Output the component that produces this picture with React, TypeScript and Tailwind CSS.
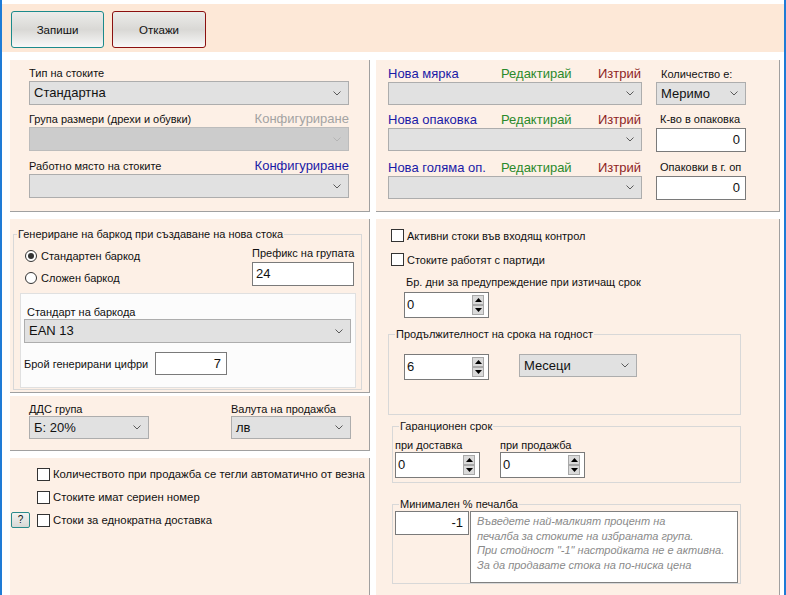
const panel = 'bg-[#fdf0e6] border-[#a0a0a0]'

function Chevron({ muted }: { muted?: boolean }) {
  return (
    <svg width="8" height="5" viewBox="0 0 8 5" className="shrink-0">
      <path d="M0.5 0.5 L4 4 L7.5 0.5" fill="none" stroke={muted ? '#b4b4b4' : '#5a5a5a'} strokeWidth="1" />
    </svg>
  )
}

function Select({ value, className = '', disabled }: { value?: string; className?: string; disabled?: boolean }) {
  return (
    <div
      className={`flex items-center justify-between border pl-[4px] pr-[7px] text-[13px] ${
        disabled ? 'border-[#bcbcbc] bg-[#cccccc]' : 'border-[#adadad] bg-[#e1e1e1]'
      } ${className}`}
    >
      <span>{value}</span>
      <Chevron muted={disabled} />
    </div>
  )
}

function Input({ value, className = '' }: { value: string; className?: string }) {
  return (
    <div className={`flex items-center justify-end border border-[#7a7a7a] bg-white pr-[5px] text-[13px] ${className}`}>
      {value}
    </div>
  )
}

function SpinBtn({ up }: { up?: boolean }) {
  return (
    <div className="flex h-[10px] w-[12px] items-center justify-center border border-[#a8a8a8] bg-[#dadada]">
      <svg width="7" height="4" viewBox="0 0 7 4">
        <path d={up ? 'M0 4 L3.5 0 L7 4 Z' : 'M0 0 L3.5 4 L7 0 Z'} fill="#000" />
      </svg>
    </div>
  )
}

function Spin({ value, className = '' }: { value: string; className?: string }) {
  return (
    <div className={`flex h-[26px] w-[85px] items-center justify-between border border-[#7a7a7a] bg-white pl-[2px] pr-[4px] text-[13px] ${className}`}>
      <span>{value}</span>
      <div className="flex flex-col">
        <SpinBtn up />
        <SpinBtn />
      </div>
    </div>
  )
}

function Check({ label }: { label: string }) {
  return (
    <div className="flex h-[13px] items-center gap-[3px]">
      <span className="h-[13px] w-[13px] shrink-0 border border-[#333333] bg-white" />
      <span className="whitespace-nowrap">{label}</span>
    </div>
  )
}

function Radio({ label, on }: { label: string; on?: boolean }) {
  return (
    <div className="flex h-[12px] items-center gap-[4px]">
      <span className="flex h-[12px] w-[12px] shrink-0 items-center justify-center rounded-full border border-[#333333] bg-white">
        {on && <span className="h-[6px] w-[6px] rounded-full bg-[#333333]" />}
      </span>
      <span className="whitespace-nowrap">{label}</span>
    </div>
  )
}

function MeasureRow({ title, h }: { title: string; h: string }) {
  return (
    <>
      <div className={`flex items-end text-[13px] leading-[16px] ${h}`}>
        <span className="w-[113px] text-[#1a1aa6]">{title}</span>
        <span className="w-[97px] text-[#2b8a2b]">Редактирай</span>
        <span className="text-[#8e1f1f]">Изтрий</span>
      </div>
      <Select className="h-[23px]" />
    </>
  )
}

export default function App() {
  return (
    <div className="flex h-[595px] w-[786px] flex-col overflow-hidden border-x-2 border-[#1e7bd6] bg-white font-['Liberation_Sans',Arial,sans-serif] text-[11px] leading-[14px] text-[#111111]">
      {/* Toolbar */}
      <div className="mt-[4px] flex h-[48px] shrink-0 gap-[8px] bg-[#fde8d7] pl-[9px] pt-[7px]">
        <button className="h-[37px] w-[93px] rounded-[3px] border border-[#1b8a8c] bg-gradient-to-b from-[#ececea] via-[#d9d8d5] to-[#f8f8f8] text-[11.5px]">
          Запиши
        </button>
        <button className="h-[37px] w-[94px] rounded-[3px] border border-[#8b1010] bg-gradient-to-b from-[#ececea] via-[#d9d8d5] to-[#f8f8f8] text-[11.5px]">
          Откажи
        </button>
      </div>

      <div className="mt-[8px] flex min-h-0 flex-1 gap-[6px] pl-[8px]">
        {/* Left column */}
        <div className="flex w-[360px] flex-col">
          <div className={`h-[152px] border-b border-r pl-[19px] pr-[20px] pt-[6px] ${panel}`}>
            <div className="leading-[15px]">Тип на стоките</div>
            <Select value="Стандартна" className="h-[24px]" />
            <div className="flex h-[22px] items-end justify-between">
              <span className="leading-[15px]">Група размери (дрехи и обувки)</span>
              <span className="text-[13px] leading-[16px] text-[#a3a3a3]">Конфигуриране</span>
            </div>
            <Select disabled className="h-[24px]" />
            <div className="flex h-[23px] items-end justify-between">
              <span className="leading-[15px]">Работно място на стоките</span>
              <span className="text-[13px] leading-[16px] text-[#1a1aa6]">Конфигуриране</span>
            </div>
            <Select className="h-[24px]" />
          </div>

          <div className={`mt-[7px] h-[174px] border-b border-r pl-[3px] pt-[8px] ${panel}`}>
            <fieldset className="w-[349px] border border-[#d8d8d8]">
              <legend className="ml-[3px] px-[1px]">Генериране на баркод при създаване на нова стока</legend>
              <div className="flex">
                <div className="flex w-[238px] flex-col gap-[10px] pl-[11px] pt-[9px]">
                  <Radio label="Стандартен баркод" on />
                  <Radio label="Сложен баркод" />
                </div>
                <div className="w-[102px] pt-[5px]">
                  <div className="whitespace-nowrap">Префикс на групата</div>
                  <div className="mt-[2px] flex h-[24px] items-center border border-[#7a7a7a] bg-white pl-[3px] text-[13px]">24</div>
                </div>
              </div>
              <div className="mb-[1px] ml-[6px] mt-[7px] h-[95px] w-[336px] border border-[#e0e0e0] bg-[#fcfcfc] pl-[3px] pt-[11px]">
                <div className="pl-[3px]">Стандарт на баркода</div>
                <Select value="EAN 13" className="h-[24px] w-[327px]" />
                <div className="mt-[9px] flex items-center">
                  <span className="w-[131px]">Брой генерирани цифри</span>
                  <Input value="7" className="h-[23px] w-[72px]" />
                </div>
              </div>
            </fieldset>
          </div>

          <div className={`mt-[3px] flex h-[55px] gap-[82px] border-b border-r pl-[19px] pt-[6px] ${panel}`}>
            <div className="w-[120px]">
              <div>ДДС група</div>
              <Select value="Б: 20%" className="h-[23px]" />
            </div>
            <div className="w-[120px]">
              <div>Валута на продажба</div>
              <Select value="лв" className="h-[23px]" />
            </div>
          </div>

          <div className={`mt-[7px] flex flex-1 flex-col gap-[7px] border-r pl-[1px] pt-[8px] text-[11.3px] ${panel}`}>
            <div className="flex h-[16px] items-center pl-[26px]">
              <Check label="Количеството при продажба се тегли автоматично от везна" />
            </div>
            <div className="flex h-[16px] items-center pl-[26px]">
              <Check label="Стоките имат сериен номер" />
            </div>
            <div className="flex h-[16px] items-center gap-[7px]">
              <button className="flex h-[16px] w-[19px] items-center justify-center rounded-[2px] border border-[#2a8a8a] bg-gradient-to-b from-[#f2f2f0] to-[#d8d8d5] text-[10px]">
                ?
              </button>
              <Check label="Стоки за еднократна доставка" />
            </div>
          </div>
        </div>

        {/* Right column */}
        <div className="flex w-[404px] flex-col">
          <div className={`flex h-[152px] gap-[14px] border-b border-r pl-[12px] ${panel}`}>
            <div className="w-[254px]">
              <MeasureRow title="Нова мярка" h="h-[22px]" />
              <MeasureRow title="Нова опаковка" h="h-[23px]" />
              <MeasureRow title="Нова голяма оп." h="h-[25px]" />
            </div>
            <div className="w-[90px]">
              <div className="flex h-[22px] items-end pb-[1px] pl-[5px]">Количество е:</div>
              <Select value="Меримо" className="h-[23px]" />
              <div className="flex h-[23px] items-end pb-[2px] pl-[4px]">К-во в опаковка</div>
              <Input value="0" className="h-[24px]" />
              <div className="flex h-[24px] items-end pb-[2px] pl-[4px]">Опаковки в г. оп</div>
              <Input value="0" className="h-[24px]" />
            </div>
          </div>

          <div className={`mt-[7px] flex flex-1 flex-col border-r pt-[10px] ${panel}`}>
            <div className="flex flex-col gap-[11px] pl-[15px]">
              <Check label="Активни стоки във входящ контрол" />
              <Check label="Стоките работят с партиди" />
            </div>
            <div className="ml-[30px] mt-[9px]">Бр. дни за предупреждение при изтичащ срок</div>
            <Spin value="0" className="ml-[28px] mt-[3px]" />

            <fieldset className="ml-[12px] mt-[9px] w-[353px] border border-[#d8d8d8] pb-[34px]">
              <legend className="ml-[6px] px-[1px]">Продължителност на срока на годност</legend>
              <div className="flex items-start gap-[30px] pl-[15px] pt-[13px]">
                <Spin value="6" />
                <Select value="Месеци" className="h-[23px] w-[118px]" />
              </div>
            </fieldset>

            <fieldset className="ml-[16px] mt-[4px] w-[349px] border border-[#d8d8d8] pb-[4px]">
              <legend className="ml-[6px] px-[1px]">Гаранционен срок</legend>
              <div className="flex gap-[20px] pl-[2px] pt-[5px]">
                <div>
                  <div>при доставка</div>
                  <Spin value="0" />
                </div>
                <div>
                  <div>при продажба</div>
                  <Spin value="0" />
                </div>
              </div>
            </fieldset>

            <fieldset className="ml-[16px] mt-[14px] w-[349px] border border-[#d8d8d8]">
              <legend className="ml-[6px] px-[1px]">Минимален % печалба</legend>
              <div className="flex items-start gap-[1px] pl-[2px]">
                <Input value="-1" className="h-[24px] w-[74px]" />
                <div className="h-[72px] w-[268px] whitespace-nowrap border border-[#808080] bg-white pl-[6px] pt-[2px] text-[11px] italic leading-[14.5px] text-[#8a8a8a]">
                  Въведете най-малкият процент на
                  <br />
                  печалба за стоките на избраната група.
                  <br />
                  При стойност "-1" настройката не е активна.
                  <br />
                  За да продавате стока на по-ниска цена
                </div>
              </div>
            </fieldset>
          </div>
        </div>
      </div>
    </div>
  )
}
